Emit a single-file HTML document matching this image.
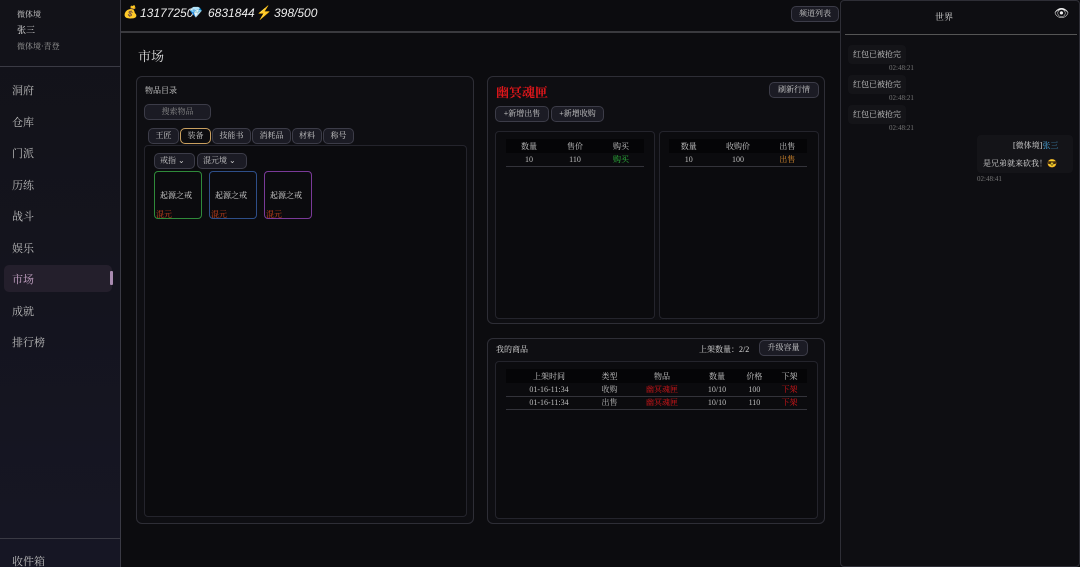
<!DOCTYPE html>
<html><head><meta charset="utf-8"><style>
*{box-sizing:border-box;margin:0;padding:0}
html,body{width:1080px;height:567px;overflow:hidden}
body{background:#0c0c0f;color:#ddd;font-family:"Liberation Serif","Noto Serif CJK SC",serif;font-size:9px;position:relative}
.a{position:absolute}
.side{left:0;top:0;width:121px;height:567px;background:linear-gradient(#121218,#161624);border-right:1px solid #3a3a44}
.nav{left:12px;font-size:11px;color:#bbb}
.btn{position:absolute;border:1px solid #3c3c48;background:#1b1b24;border-radius:5px;color:#ccc;text-align:center;font-size:8px}
.panel{position:absolute;border:1px solid #2e2e36;border-radius:6px;background:#0e0e12}
.inner{position:absolute;border:1px solid #24242c;border-radius:4px;background:#0b0b0e}
table{border-collapse:collapse;position:absolute;font-size:8px;text-align:center}
th{background:#050507;color:#ccc;font-weight:normal;height:14px}
td{height:13px;border-bottom:1px solid #33333a;color:#bbb}
.red{color:#e0161a}
.card{position:absolute;top:171px;width:48px;height:48px;border-radius:4px;font-size:8px}
.card span{position:absolute;left:5px;top:18px;color:#ddd}
.card i{position:absolute;left:1px;top:37px;color:#d8461e;font-style:normal}
.msg{position:absolute;left:848px;background:#141418;border-radius:4px;padding:4px 5px;font-size:8px;color:#ccc}
.tm{position:absolute;font-size:7px;color:#777}
.cur{font-size:12px;color:#eee;font-family:"Liberation Sans Narrow","Liberation Sans",sans-serif;font-style:italic}
</style></head><body>
<div class="a side">
<div class="a" style="left:17px;top:9px;font-size:8px;color:#ccc">微体境</div>
<div class="a" style="left:17px;top:23px;font-size:9px;color:#eee">张三</div>
<div class="a" style="left:17px;top:41px;font-size:8px;color:#999">微体境·青登</div>
<div class="a" style="left:0;top:66px;width:120px;height:1px;background:#3a3a44"></div>
<div class="a nav" style="top:82px">洞府</div>
<div class="a nav" style="top:114px">仓库</div>
<div class="a nav" style="top:145px">门派</div>
<div class="a nav" style="top:177px">历练</div>
<div class="a nav" style="top:208px">战斗</div>
<div class="a nav" style="top:240px">娱乐</div>
<div class="a" style="left:4px;top:265px;width:108px;height:27px;background:#241f2c;border-radius:5px"></div>
<div class="a" style="left:110px;top:271px;width:3px;height:14px;background:#a88ab0;border-radius:1px"></div>
<div class="a nav" style="top:271px;color:#c9a6c9">市场</div>
<div class="a nav" style="top:303px">成就</div>
<div class="a nav" style="top:334px">排行榜</div>
<div class="a" style="left:0;top:538px;width:120px;height:1px;background:#3a3a44"></div>
<div class="a nav" style="top:553px">收件箱</div>
</div>
<div class="a" style="left:121px;top:31px;width:719px;height:2px;background:#3a3a3e"></div>
<div class="a" style="left:123px;top:5px;font-size:12px">💰</div>
<div class="a cur" style="left:140px;top:6px">13177250</div>
<div class="a" style="left:189px;top:6px;font-size:11px">💎</div>
<div class="a cur" style="left:208px;top:6px">6831844</div>
<div class="a" style="left:256px;top:5px;font-size:13px;color:#f0b020">⚡</div>
<div class="a cur" style="left:274px;top:6px">398/500</div>
<div class="btn" style="left:791px;top:6px;width:48px;height:16px;line-height:14px">频道列表</div>
<div class="a" style="left:138px;top:46px;font-size:13px;color:#ddd">市场</div>

<div class="panel" style="left:136px;top:76px;width:338px;height:448px">
<div class="a" style="left:8px;top:8px;font-size:8px;color:#ddd">物品目录</div>
<div class="btn" style="left:7px;top:27px;width:67px;height:16px;line-height:14px;color:#888">搜索物品</div>
<div class="btn" style="left:11px;top:51px;width:31px;height:16px;line-height:14px">王匠</div>
<div class="btn" style="left:43px;top:51px;width:31px;height:16px;line-height:14px;border-color:#c9a060;background:#0c0c0f">装备</div>
<div class="btn" style="left:75px;top:51px;width:39px;height:16px;line-height:14px">技能书</div>
<div class="btn" style="left:115px;top:51px;width:39px;height:16px;line-height:14px">消耗品</div>
<div class="btn" style="left:155px;top:51px;width:30px;height:16px;line-height:14px">材料</div>
<div class="btn" style="left:186px;top:51px;width:31px;height:16px;line-height:14px">称号</div>
<div class="inner" style="left:7px;top:68px;width:323px;height:372px"></div>
<div class="btn" style="left:17px;top:76px;width:41px;height:16px;line-height:14px;text-align:left;padding-left:5px">戒指 ⌄</div>
<div class="btn" style="left:60px;top:76px;width:50px;height:16px;line-height:14px;text-align:left;padding-left:5px">混元境 ⌄</div>
</div>
<div class="card" style="left:154px;border:1px solid #2f8a3a"><span>起源之戒</span><i>混元</i></div>
<div class="card" style="left:209px;border:1px solid #2e4e88"><span>起源之戒</span><i>混元</i></div>
<div class="card" style="left:264px;border:1px solid #7a3a98"><span>起源之戒</span><i>混元</i></div>

<div class="panel" style="left:487px;top:76px;width:338px;height:248px">
<div class="a" style="left:8px;top:5px;font-size:13px;color:#e0161a;font-weight:bold">幽冥魂匣</div>
<div class="btn" style="left:281px;top:5px;width:50px;height:16px;line-height:14px">刷新行情</div>
<div class="btn" style="left:7px;top:29px;width:54px;height:16px;line-height:14px">+新增出售</div>
<div class="btn" style="left:63px;top:29px;width:53px;height:16px;line-height:14px">+新增收购</div>
<div class="inner" style="left:7px;top:54px;width:160px;height:188px"></div>
<div class="inner" style="left:171px;top:54px;width:160px;height:188px"></div>
</div>
<table style="left:506px;top:139px;width:138px"><tr><th>数量</th><th>售价</th><th>购买</th></tr><tr><td>10</td><td>110</td><td style="color:#30c040">购买</td></tr></table>
<table style="left:669px;top:139px;width:138px"><tr><th>数量</th><th>收购价</th><th>出售</th></tr><tr><td>10</td><td>100</td><td style="color:#e09030">出售</td></tr></table>

<div class="panel" style="left:487px;top:338px;width:338px;height:186px">
<div class="a" style="left:8px;top:5px;font-size:8px;color:#ddd">我的商品</div>
<div class="a" style="left:211px;top:5px;font-size:8px;color:#ddd">上架数量：2/2</div>
<div class="btn" style="left:271px;top:1px;width:49px;height:16px;line-height:14px">升级容量</div>
<div class="inner" style="left:7px;top:22px;width:323px;height:158px"></div>
</div>
<table style="left:506px;top:369px;width:301px"><tr><th>上架时间</th><th>类型</th><th>物品</th><th>数量</th><th>价格</th><th>下架</th></tr>
<tr><td>01-16-11:34</td><td>收购</td><td class="red">幽冥魂匣</td><td>10/10</td><td>100</td><td class="red">下架</td></tr>
<tr><td>01-16-11:34</td><td>出售</td><td class="red">幽冥魂匣</td><td>10/10</td><td>110</td><td class="red">下架</td></tr></table>

<div class="a" style="left:840px;top:0;width:240px;height:567px;background:#0e0e12;border:1px solid #2e2e36;border-radius:4px"></div>
<div class="a" style="left:935px;top:10px;font-size:9px;color:#ddd">世界</div>
<div class="a" style="left:1054px;top:6px;font-size:12px;color:#eee">👁</div>
<div class="a" style="left:845px;top:34px;width:232px;height:1px;background:#555"></div>
<div class="msg" style="top:45px">红包已被抢完</div><div class="tm" style="left:889px;top:64px">02:48:21</div>
<div class="msg" style="top:75px">红包已被抢完</div><div class="tm" style="left:889px;top:94px">02:48:21</div>
<div class="msg" style="top:105px">红包已被抢完</div><div class="tm" style="left:889px;top:124px">02:48:21</div>
<div class="a" style="left:977px;top:135px;width:96px;height:38px;background:#141418;border-radius:4px"></div>
<div class="a" style="left:1013px;top:140px;font-size:8px;color:#ddd">[微体境]<span style="color:#4aa8e0">张三</span></div>
<div class="a" style="left:983px;top:158px;font-size:8px;color:#ddd">是兄弟就来砍我！😎</div>
<div class="tm" style="left:977px;top:175px">02:48:41</div>
</body></html>
